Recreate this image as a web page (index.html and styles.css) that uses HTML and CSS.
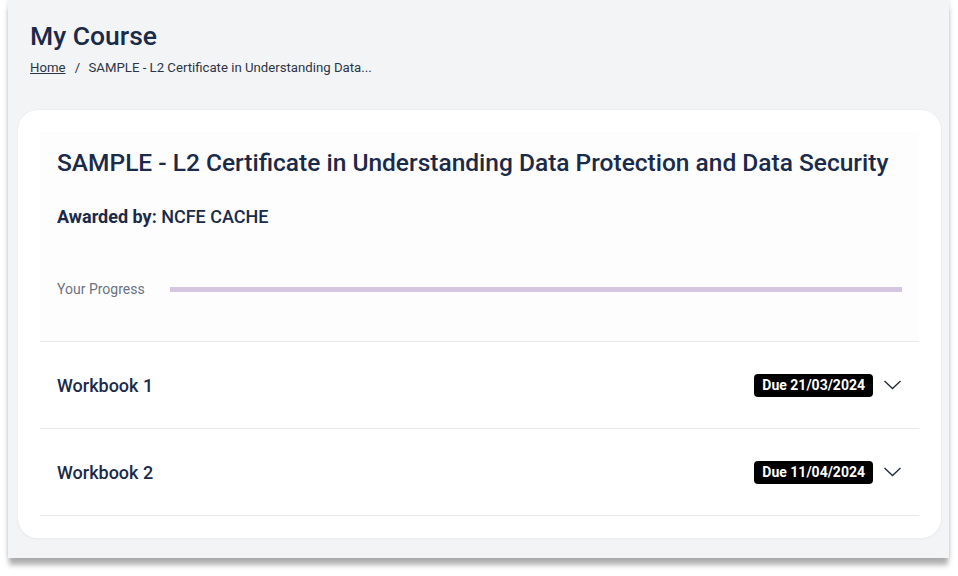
FILE: index.html
```html
<!DOCTYPE html>
<html lang="en">
<head>
    <meta charset="UTF-8">
    <title>My Course</title>
    <link rel="stylesheet" href="styles.css">
</head>
<body>

    <div class="frame">
        <!-- Page header -->
        <header class="page-head">
            <h1>My Course</h1>
            <nav class="crumbs">
                <a href="#">Home</a>
                <span class="sep">/</span>
                <span>SAMPLE - L2 Certificate in Understanding Data...</span>
            </nav>
        </header>

        <!-- Course card -->
        <section class="card">
            <div class="card-head">
                <h2>SAMPLE - L2 Certificate in Understanding Data Protection and Data Security</h2>
                <p class="awarded"><strong>Awarded by:</strong> NCFE CACHE</p>
                <div class="progress">
                    <span class="progress-label">Your Progress</span>
                    <div class="progress-track"></div>
                </div>
            </div>

            <div class="workbook">
                <span class="wb-name">Workbook 1</span>
                <div class="wb-right">
                    <span class="due">Due 21/03/2024</span>
                    <svg class="chev" width="17" height="10" viewBox="0 0 17 10"><path d="M0.5 1l8 7.5L16.5 1" fill="none" stroke="#1f2937" stroke-width="1.3"/></svg>
                </div>
            </div>
            <div class="workbook">
                <span class="wb-name">Workbook 2</span>
                <div class="wb-right">
                    <span class="due">Due 11/04/2024</span>
                    <svg class="chev" width="17" height="10" viewBox="0 0 17 10"><path d="M0.5 1l8 7.5L16.5 1" fill="none" stroke="#1f2937" stroke-width="1.3"/></svg>
                </div>
            </div>
        </section>
    </div>

</body>
</html>
```

FILE: styles.css
```css
body {
    margin: 0;
    min-height: 576px;
    background: #fff;
    font-family: Roboto, 'Liberation Sans', sans-serif;
    color: #1a2a48;
}
.frame {
    margin: 0 0 18px 8px;
    width: 941px;
    height: 558px;
    box-sizing: border-box;
    background: #f3f4f6;
    padding: 21px 8px 0 10px;
    box-shadow: 0 8px 5px -1px rgba(0,0,0,0.3), 0 0 5px rgba(0,0,0,0.12);
}
.page-head {
    padding-left: 12px;
    height: 89px;
}
h1 {
    margin: 0;
    font-size: 26.5px;
    font-weight: 500;
    line-height: 30px;
}
.crumbs {
    margin-top: 8px;
    font-size: 13.2px;
    line-height: 18px;
    color: #2b3547;
}
.crumbs a {
    color: #2b3547;
    text-decoration: underline;
}
.sep {
    margin: 0 5px 0 6px;
}
.card {
    background: #fff;
    border-radius: 20px;
    padding: 22px 22px 22px 22px;
    box-shadow: 0 0 0 1px #eceef1, 0 1px 3px rgba(0,0,0,0.05);
}
.card-head {
    padding: 15px 17px 42px;
    background: #fdfdfd;
}
h2 {
    margin: 0;
    font-size: 24.5px;
    font-weight: 500;
    line-height: 32px;
}
.awarded {
    margin: 26px 0 0;
    font-size: 18px;
    line-height: 24px;
    font-weight: 500;
}
.awarded strong {
    font-weight: 700;
}
.progress {
    margin-top: 50px;
    display: flex;
    align-items: center;
    gap: 25px;
    height: 20px;
}
.progress-label {
    font-size: 14px;
    color: #6b7280;
    white-space: nowrap;
}
.progress-track {
    flex: 1;
    height: 5px;
    background: #d7c6df;
}
.workbook {
    display: flex;
    align-items: center;
    justify-content: space-between;
    height: 86px;
    padding: 0 18px 0 17px;
    border-top: 1px solid #e8e9ec;
}
.workbook:last-child {
    border-bottom: 1px solid #e8e9ec;
}
.wb-name {
    font-size: 18px;
    font-weight: 500;
}
.wb-right {
    display: flex;
    align-items: center;
    gap: 11px;
}
.due {
    background: #000;
    color: #fff;
    font-size: 14px;
    font-weight: 700;
    line-height: 23px;
    padding: 0 8px;
    border-radius: 4px;
}
.chev {
    display: block;
}
```
